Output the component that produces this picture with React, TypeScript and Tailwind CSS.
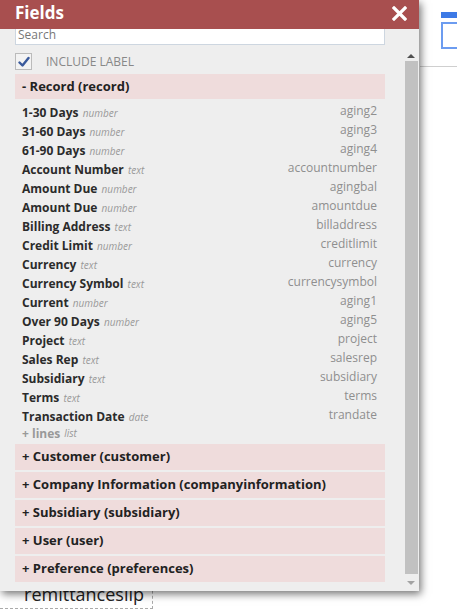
const fields: { label: string; type: string; id: string }[] = [
  { label: '1-30 Days', type: 'number', id: 'aging2' },
  { label: '31-60 Days', type: 'number', id: 'aging3' },
  { label: '61-90 Days', type: 'number', id: 'aging4' },
  { label: 'Account Number', type: 'text', id: 'accountnumber' },
  { label: 'Amount Due', type: 'number', id: 'agingbal' },
  { label: 'Amount Due', type: 'number', id: 'amountdue' },
  { label: 'Billing Address', type: 'text', id: 'billaddress' },
  { label: 'Credit Limit', type: 'number', id: 'creditlimit' },
  { label: 'Currency', type: 'text', id: 'currency' },
  { label: 'Currency Symbol', type: 'text', id: 'currencysymbol' },
  { label: 'Current', type: 'number', id: 'aging1' },
  { label: 'Over 90 Days', type: 'number', id: 'aging5' },
  { label: 'Project', type: 'text', id: 'project' },
  { label: 'Sales Rep', type: 'text', id: 'salesrep' },
  { label: 'Subsidiary', type: 'text', id: 'subsidiary' },
  { label: 'Terms', type: 'text', id: 'terms' },
  { label: 'Transaction Date', type: 'date', id: 'trandate' },
]

const sections = [
  'Customer (customer)',
  'Company Information (companyinformation)',
  'Subsidiary (subsidiary)',
  'User (user)',
  'Preference (preferences)',
]

export default function App() {
  return (
    <div className="relative h-[614px] w-[457px] overflow-hidden bg-white font-['Open_Sans',sans-serif]">
      {/* page behind the dialog */}
      <div className="absolute left-[441px] top-[12px] h-[6px] w-[20px] bg-[#3d7ae6]" />
      <div className="absolute left-[441px] top-[22px] h-[27px] w-[20px] border-2 border-[#6c9cf0] bg-white" />
      <div className="absolute left-[420px] top-[66px] h-px w-[40px] bg-[#cfcfcf]" />
      <div className="absolute left-0 top-[560px] flex h-[49px] w-[153px] items-end justify-end border-b border-r border-dashed border-[#aaa] pb-[3px] pr-[8px]">
        <span className="whitespace-nowrap text-[18px] leading-[22px] text-[#222]">remittanceslip</span>
      </div>

      {/* dialog */}
      <div className="absolute left-0 top-0 flex h-[591px] w-[419px] flex-col bg-[#eeeeee] shadow-[2px_3px_8px_rgba(0,0,0,0.55)]">
        <div className="flex h-[29px] shrink-0 items-center justify-between bg-[#a84f4f] pl-[15px] pr-[12px]">
          <span className="-mt-[5px] text-[17px] font-bold leading-none text-white">Fields</span>
          <div className="-mt-[3px]">
            <CloseIcon />
          </div>
        </div>

        <div className="flex min-h-0 flex-1">
          <div className="flex-1 pl-[15px] pr-[18px]">
            <div className="flex h-[16px] items-center border-x border-b border-[#cdd6e0] bg-white px-[2px]">
              <span className="-mt-[3px] text-[12px] leading-none text-[#777]">Search</span>
            </div>

            <div className="mt-[8px] flex h-[17px] items-center">
              <div className="flex h-[17px] w-[17px] items-center justify-center border border-[#bbb] bg-[#f3f3f3]">
                <CheckIcon />
              </div>
              <span className="ml-[14px] text-[12px] text-[#888]">INCLUDE LABEL</span>
            </div>

            <div className="mt-[4px] flex h-[25px] items-center bg-[#efdcdc] pl-[7px]">
              <span className="text-[13px] font-bold text-[#222]">- Record (record)</span>
            </div>

            <div className="pb-[1px] pl-[7px] pr-[8px] pt-[2px]">
              {fields.map((f, i) => (
                <div key={i} className="flex h-[19px] items-center justify-between">
                  <span className="whitespace-nowrap">
                    <span className="text-[12px] font-bold text-[#2b2b2b]">{f.label}</span>{' '}
                    <span className="text-[10px] italic text-[#999]">{f.type}</span>
                  </span>
                  <span className="text-[12px] text-[#8f8f8f]">{f.id}</span>
                </div>
              ))}
              <div className="flex h-[19px] items-center">
                <span className="text-[12px] font-bold text-[#999]">+ lines</span>
                <span className="ml-[4px] text-[10px] italic text-[#999]">list</span>
              </div>
            </div>

            <div className="flex flex-col gap-[2px]">
              {sections.map((s) => (
                <div key={s} className="flex h-[26px] items-center bg-[#efdcdc] pl-[7px]">
                  <span className="text-[13px] font-bold text-[#222]">+ {s}</span>
                </div>
              ))}
            </div>
          </div>

          {/* scrollbar */}
          <div className="flex w-[16px] shrink-0 flex-col items-center">
            <div className="flex h-[32px] w-full items-end justify-center pb-[3px]">
              <div className="h-0 w-0 border-x-[4px] border-b-[4px] border-x-transparent border-b-[#505050]" />
            </div>
            <div className="h-[513px] w-[13px] bg-[#c1c1c1]" />
            <div className="flex flex-1 items-center justify-center">
              <div className="h-0 w-0 border-x-[4px] border-t-[4px] border-x-transparent border-t-[#a3a3a3]" />
            </div>
          </div>
        </div>
      </div>
    </div>
  )
}

function CloseIcon() {
  return (
    <svg className="h-[15px] w-[15px]" viewBox="0 0 15 15" fill="none" stroke="white">
      <path strokeWidth={3.2} strokeLinecap="square" d="M2 2l11 11M13 2L2 13" />
    </svg>
  )
}

function CheckIcon() {
  return (
    <svg className="h-[12px] w-[12px]" viewBox="0 0 12 12" fill="none" stroke="#3a5a9c">
      <path strokeWidth={2.4} strokeLinecap="round" strokeLinejoin="round" d="M1.5 6.5l3 3 6-7.5" />
    </svg>
  )
}
